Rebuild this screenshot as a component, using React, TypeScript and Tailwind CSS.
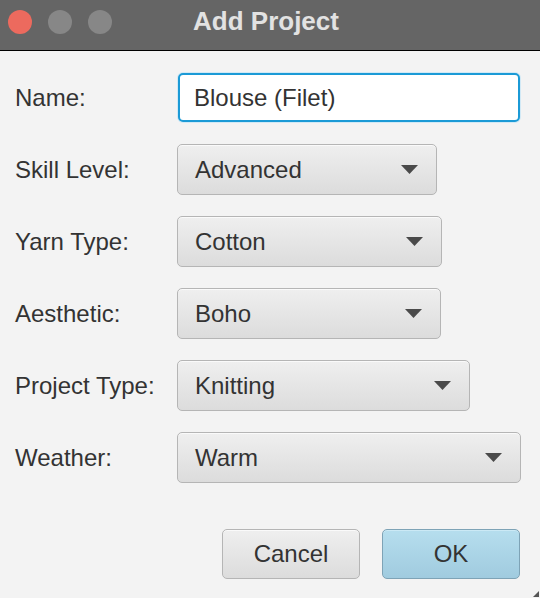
import React from 'react'

const FIELDS = [
  { label: 'Skill Level:', value: 'Advanced', width: 'w-[260px]' },
  { label: 'Yarn Type:', value: 'Cotton', width: 'w-[265px]' },
  { label: 'Aesthetic:', value: 'Boho', width: 'w-[264px]' },
  { label: 'Project Type:', value: 'Knitting', width: 'w-[293px]' },
  { label: 'Weather:', value: 'Warm', width: 'w-[344px]' },
]

function Combo({ value, width }: { value: string; width: string }) {
  return (
    <div className={`${width} h-[51px] flex items-center justify-between pl-[17px] pr-[18px] rounded-[5px] border border-[#b5b5b5] bg-gradient-to-b from-[#efefef] to-[#dcdcdc] shadow-[inset_0_1px_0_#fafafa]`}>
      <span>{value}</span>
      <svg width="17" height="9" viewBox="0 0 17 9"><path d="M0 0H17L8.5 9Z" fill="#4a4a4a" /></svg>
    </div>
  )
}

export default function App() {
  return (
    <div className="w-[540px] h-[598px] flex flex-col bg-[#f3f3f3] text-[#333333] text-[24px] overflow-hidden" style={{ fontFamily: '"Liberation Sans", Arial, sans-serif' }}>
      <div className="h-[51px] shrink-0 relative flex items-center justify-center bg-[#656565] border-b border-black">
        <div className="absolute left-[8px] top-[10px] flex gap-[16px]">
          <div className="w-[24px] h-[24px] rounded-full bg-[#ec6a5e]" />
          <div className="w-[24px] h-[24px] rounded-full bg-[#878787]" />
          <div className="w-[24px] h-[24px] rounded-full bg-[#878787]" />
        </div>
        <span className="font-bold text-[26px] text-[#e2e2e2] -mt-[7px] -ml-[8px]">Add Project</span>
      </div>

      <div className="relative flex-1 flex flex-col pt-[21px] px-[15px]">
        <div className="flex flex-col gap-[21px]">
          <div className="flex items-center h-[51px]">
            <span className="w-[162px]">Name:</span>
            <div className="w-[344px] h-[51px] rounded-[6px] bg-[#d2e9f5] p-[1px]">
              <div className="h-full rounded-[5px] border-2 border-[#1b9ad6] bg-white flex items-center pl-[14px]">Blouse (Filet)</div>
            </div>
          </div>
          {FIELDS.map((f) => (
            <div key={f.label} className="flex items-center h-[51px]">
              <span className="w-[162px]">{f.label}</span>
              <Combo value={f.value} width={f.width} />
            </div>
          ))}
        </div>

        <div className="flex justify-end gap-[22px] mt-[46px] pr-[5px]">
          <button className="w-[138px] h-[50px] rounded-[5px] border border-[#b5b5b5] bg-gradient-to-b from-[#efefef] to-[#dcdcdc] shadow-[inset_0_1px_0_#fafafa]">Cancel</button>
          <button className="w-[138px] h-[50px] rounded-[5px] border border-[#7ea3b6] bg-gradient-to-b from-[#b6deee] to-[#a0cbdf] shadow-[inset_0_1px_0_#cbe9f5]">OK</button>
        </div>

        <svg className="absolute right-[1px] bottom-[1px]" width="6" height="6" viewBox="0 0 6 6"><path d="M6 0V6H0Z" fill="#555" /></svg>
      </div>
    </div>
  )
}
